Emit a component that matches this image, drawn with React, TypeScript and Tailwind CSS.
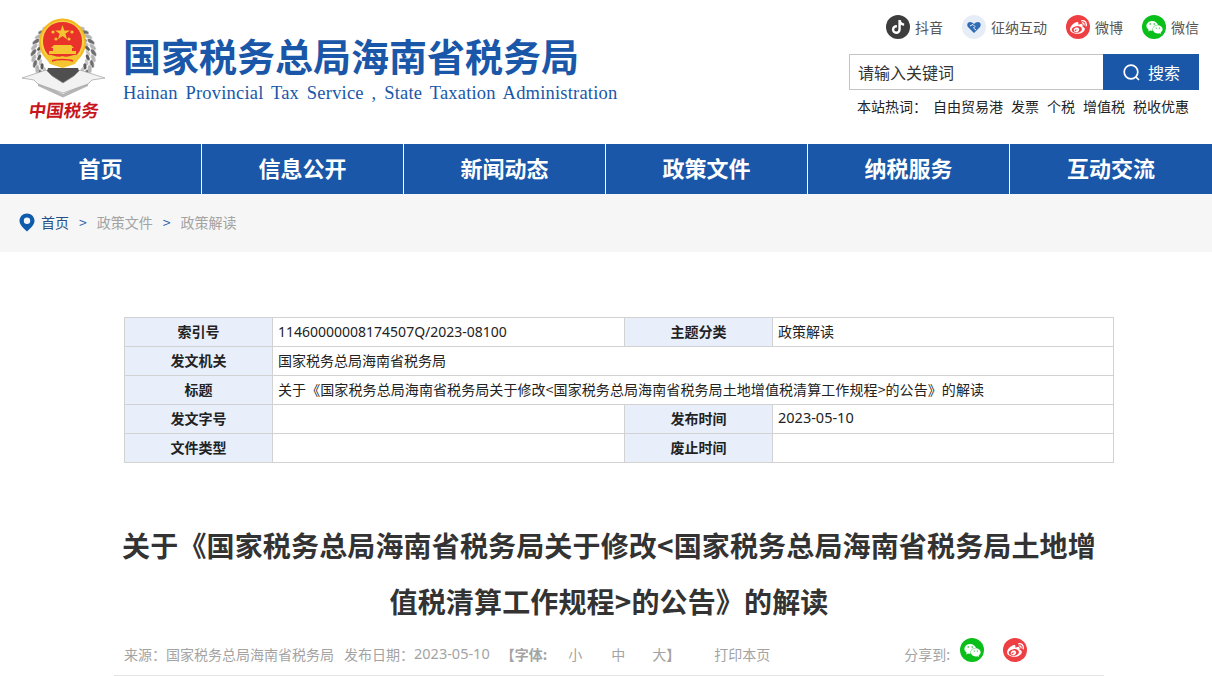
import { FaTiktok, FaWeibo, FaWeixin } from "react-icons/fa";

const cjk = "font-['Noto_Sans_CJK_SC','Liberation_Sans',sans-serif]";
const latin = "font-['Noto_Sans','Noto_Sans_CJK_SC',sans-serif]";

// one wheat ear: small leaves running along an arc around the badge
function wheat(side: number) {
    const leaves = [];
    for (let i = 0; i < 15; i++) {
        const a = ((-55 + i * 10.5) * Math.PI) / 180;
        const x = 41.5 + side * 30 * Math.cos(a);
        const y = 36 + 31 * Math.sin(a);
        const rot = side * ((-55 + i * 10.5) + 60);
        leaves.push(<ellipse key={`o${i}`} cx={x} cy={y} rx="4.2" ry="2.1" transform={`rotate(${rot} ${x} ${y})`} fill={i % 2 ? "#6f6f6f" : "#b4b4b4"} stroke="#efefef" strokeWidth="0.5" />);
        const x2 = 41.5 + side * 24.5 * Math.cos(a);
        const y2 = 36 + 25.5 * Math.sin(a);
        leaves.push(<ellipse key={`i${i}`} cx={x2} cy={y2} rx="3.2" ry="1.6" transform={`rotate(${rot} ${x2} ${y2})`} fill={i % 2 ? "#c4c4c4" : "#5c5c5c"} />);
    }
    return leaves;
}

function Emblem() {
    return (
        <svg width="84" height="80" viewBox="0 0 84 80">
            <g>{wheat(1)}</g>
            <g>{wheat(-1)}</g>
            {/* ribbon */}
            <path d="M26 50 L56 50 L60 62 L41 72 L22 62 Z" fill="#4f4f4f" />
            <path d="M16 64 L41 76 L66 64 L66 68 L41 79.5 L16 68 Z" fill="#b5b5b5" />
            <path d="M0 60 L24 52 L30 58 L41 65 L52 58 L58 52 L83 60 L70 62 L66 66 L41 75 L16 66 L12 62 Z" fill="#f2f2f2" stroke="#a0a0a0" strokeWidth="0.7" />
            {/* badge */}
            <circle cx="40.5" cy="24" r="23.5" fill="#f2b91f" />
            <circle cx="40.5" cy="24" r="21.5" fill="#f8d34a" />
            <path d="M40.5 4 C52 4 60 12 60 23 C60 30 57 35 53 39 L28 39 C24 35 21 30 21 23 C21 12 29 4 40.5 4 Z" fill="#e9322a" />
            <path d="M40.5 7 L42.3 12.4 L48 12.4 L43.4 15.8 L45.1 21.2 L40.5 17.9 L35.9 21.2 L37.6 15.8 L33 12.4 L38.7 12.4 Z" fill="#f5c531" />
            <circle cx="31" cy="14" r="1.6" fill="#f5c531" />
            <circle cx="50" cy="14" r="1.6" fill="#f5c531" />
            <circle cx="34" cy="21" r="1.6" fill="#f5c531" />
            <circle cx="47" cy="21" r="1.6" fill="#f5c531" />
            <path d="M29 30 L32 27 L49 27 L52 30 L50 30 L50 33 L54 33 L54 36 L27 36 L27 33 L31 33 L31 30 Z" fill="#f5c531" />
            <path d="M22 38 C28 34 35 41 40.5 38 C46 41 53 34 59 38 L53 46 L40.5 50 L28 46 Z" fill="#f5c531" />
            <path d="M30 43 C35 41 46 41 51 43" stroke="#e9322a" strokeWidth="1.4" fill="none" />
        </svg>
    );
}

function HeartIcon() {
    return (
        <svg width="16" height="16" viewBox="0 0 16 16">
            <path d="M8 14 L2 8 C0.5 6 1.5 3 4 3 C5.5 3 7 3.8 8 5 C9 3.8 10.5 3 12 3 C14.5 3 15.5 6 14 8 Z" fill="#2f6cb5" />
            <path d="M4 7 L7 5.5 L9 7.5 L7.5 9 L10 11" fill="none" stroke="#ffffff" strokeWidth="0.9" />
        </svg>
    );
}

function SearchIcon() {
    return (
        <svg width="19" height="19" viewBox="0 0 19 19" fill="none" stroke="#ffffff" strokeWidth="1.7">
            <circle cx="9" cy="9" r="6.8" />
            <path d="M13.8 13.8 L17 17" />
        </svg>
    );
}

function PinIcon() {
    return (
        <svg width="16" height="19" viewBox="0 0 16 19">
            <path fillRule="evenodd" d="M8 0.5 C12.2 0.5 15.5 3.7 15.5 7.8 C15.5 11.8 11.5 15.5 8 18.5 C4.5 15.5 0.5 11.8 0.5 7.8 C0.5 3.7 3.8 0.5 8 0.5 Z M8 4.6 A3.2 3.2 0 1 0 8 11 A3.2 3.2 0 1 0 8 4.6 Z" fill="#0f5cad" />
        </svg>
    );
}

const socials = [
    { label: "抖音", bg: "bg-[#3d3d3d]", icon: <FaTiktok className="text-white text-[14px]" /> },
    { label: "征纳互动", bg: "bg-[#e6edf7]", icon: <HeartIcon /> },
    { label: "微博", bg: "bg-[#ee3f43]", icon: <FaWeibo className="text-white text-[17px]" /> },
    { label: "微信", bg: "bg-[#0abf19]", icon: <FaWeixin className="text-white text-[17px]" /> },
];

const navItems = ["首页", "信息公开", "新闻动态", "政策文件", "纳税服务", "互动交流"];
const hotWords = ["自由贸易港", "发票", "个税", "增值税", "税收优惠"];

function Label({ children }: { children: string }) {
    return <div className="w-[148px] shrink-0 bg-[#e8effb] border-r border-[#d2d2d2] flex items-center justify-center pb-[2px] font-bold text-[14px] text-[#222]">{children}</div>;
}

function Value({ children, className }: { children?: React.ReactNode; className?: string }) {
    return <div className={`flex items-center pl-[5px] pb-[2px] text-[14px] text-[#222] whitespace-nowrap ${className}`}>{children}</div>;
}

function Row({ children, last }: { children: React.ReactNode; last?: boolean }) {
    return <div className={`flex ${last ? "h-[28px]" : "h-[29px] border-b border-[#d2d2d2]"}`}>{children}</div>;
}

export default function App() {
    return (
        <div className={`${cjk} w-[1212px] h-[676px] overflow-hidden bg-white`}>
            <header className="h-[144px] flex justify-between">
                <div className="flex pl-[22px] pt-[18px]">
                    <div className="w-[84px] flex flex-col items-center">
                        <Emblem />
                        <div className="text-[#c8161d] font-bold text-[17.5px] leading-[22px] mt-[1px] whitespace-nowrap skew-x-[-8deg]">中国税务</div>
                    </div>
                    <div className="ml-[17px] pt-[13px]">
                        <div className="text-[38px] leading-[48px] font-bold text-[#1a57a8] whitespace-nowrap">国家税务总局海南省税务局</div>
                        <div className="font-['Liberation_Serif',serif] text-[18.5px] leading-[22px] mt-[3px] text-[#1a57a8] whitespace-nowrap tracking-[0.2px] [word-spacing:3px]">Hainan Provincial Tax Service , State Taxation Administration</div>
                    </div>
                </div>
                <div className="w-[350px] mr-[13px] pt-[15px]">
                    <div className="flex justify-end gap-[19px]">
                        {socials.map((s) => (
                            <div key={s.label} className="flex items-center gap-[5px]">
                                <span className={`w-6 h-6 rounded-full flex items-center justify-center ${s.bg}`}>{s.icon}</span>
                                <span className="text-[14px] text-[#555]">{s.label}</span>
                            </div>
                        ))}
                    </div>
                    <div className="flex h-[36px] mt-[15px]">
                        <div className="flex-1 border border-[#c4c4c4] border-r-0 flex items-center pl-[8px] text-[16px] text-[#333]">请输入关键词</div>
                        <div className="w-[96px] bg-[#1a57a8] flex items-center justify-center gap-[7px] text-white text-[16px]">
                            <SearchIcon />
                            搜索
                        </div>
                    </div>
                    <div className="flex items-center text-[14px] leading-[20px] text-[#222] mt-[6px] pl-[8px] whitespace-nowrap">
                        <span className="mr-[6px]">本站热词：</span>
                        <div className="flex gap-[8px]">
                            {hotWords.map((w) => (
                                <span key={w}>{w}</span>
                            ))}
                        </div>
                    </div>
                </div>
            </header>

            <nav className="flex h-[50px] bg-[#1a57a8]">
                {navItems.map((n, i) => (
                    <div key={n} className={`w-[202px] flex items-center justify-center pb-[3px] text-white font-bold text-[22px] ${i < 5 ? "border-r border-white" : ""}`}>
                        {n}
                    </div>
                ))}
            </nav>

            <div className="h-[58px] bg-[#f6f6f6] flex items-center pl-[19px] pb-[2px] text-[14px] text-[#a3a3a3]">
                <PinIcon />
                <span className="ml-[6px] text-[#274f86]">首页</span>
                <span className="mx-[10px] text-[#2a5cab]">&gt;</span>
                <span>政策文件</span>
                <span className="mx-[10px] text-[#2a5cab]">&gt;</span>
                <span>政策解读</span>
            </div>

            <div className="w-[990px] ml-[124px] mt-[65px] border border-[#d2d2d2]">
                <Row>
                    <Label>索引号</Label>
                    <Value className={`w-[352px] border-r border-[#d2d2d2] ${latin}`}>11460000008174507Q/2023-08100</Value>
                    <Label>主题分类</Label>
                    <Value>政策解读</Value>
                </Row>
                <Row>
                    <Label>发文机关</Label>
                    <Value>国家税务总局海南省税务局</Value>
                </Row>
                <Row>
                    <Label>标题</Label>
                    <Value className="tracking-[0.09px]">关于《国家税务总局海南省税务局关于修改&lt;国家税务总局海南省税务局土地增值税清算工作规程&gt;的公告》的解读</Value>
                </Row>
                <Row>
                    <Label>发文字号</Label>
                    <Value className="w-[352px] border-r border-[#d2d2d2]" />
                    <Label>发布时间</Label>
                    <Value className={latin}>
                        <span className="text-[14.5px]">2023-05-10</span>
                    </Value>
                </Row>
                <Row last>
                    <Label>文件类型</Label>
                    <Value className="w-[352px] border-r border-[#d2d2d2]" />
                    <Label>废止时间</Label>
                    <Value />
                </Row>
            </div>

            <h1 className="w-[990px] ml-[114px] mt-[54px] text-center text-[28px] leading-[56px] font-bold text-[#333] tracking-[0.15px]">
                关于《国家税务总局海南省税务局关于修改&lt;国家税务总局海南省税务局土地增值税清算工作规程&gt;的公告》的解读
            </h1>

            <div className="w-[990px] ml-[114px] h-[47px] border-b border-[#e4e4e4] flex items-start pl-[10px] text-[14px] text-[#a3a3a3] whitespace-nowrap">
                <div className="flex items-center h-[32px] mt-[9px]">
                    <span>来源：国家税务总局海南省税务局</span>
                    <span className="ml-[10px]">发布日期：</span>
                    <span className={`${latin} text-[14.5px]`}>2023-05-10</span>
                    <span className="ml-[11px] font-bold">【字体:</span>
                    <span className="ml-[21px]">小</span>
                    <span className="ml-[29px]">中</span>
                    <span className="ml-[27px]">大</span>
                    <span className="font-bold">】</span>
                    <span className="ml-[34px]">打印本页</span>
                    <span className="ml-[134px]">分享到:</span>
                </div>
                <span className="ml-[10px] mt-[9px] w-6 h-6 rounded-full bg-[#0abf19] flex items-center justify-center"><FaWeixin className="text-white text-[17px]" /></span>
                <span className="ml-[19px] mt-[9px] w-6 h-6 rounded-full bg-[#ee3f43] flex items-center justify-center"><FaWeibo className="text-white text-[17px]" /></span>
            </div>
        </div>
    );
}
